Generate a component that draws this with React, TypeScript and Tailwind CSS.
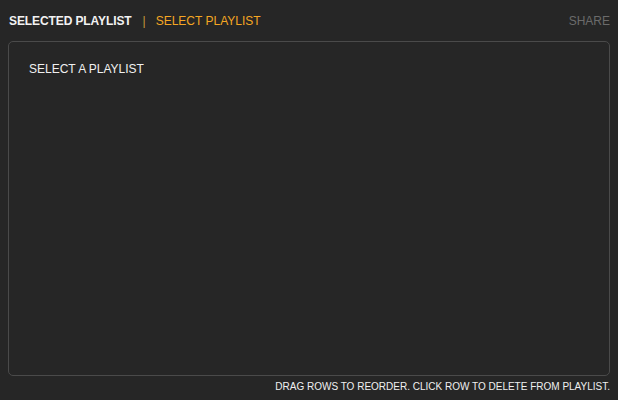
export default function App() {
  return (
    <div className="flex h-[400px] w-[618px] flex-col bg-[#262626] px-2 font-['Liberation_Sans',Arial,sans-serif]">
      <div className="flex h-[41px] items-center justify-between pl-px pt-px text-[12px]">
        <div className="flex items-center">
          <span className="font-bold tracking-[-0.1px] text-[#f2f2f2]">SELECTED PLAYLIST</span>
          <span className="ml-[11px] text-[#c79a3a]">|</span>
          <span className="ml-[10px] text-[#f5a623]">SELECT PLAYLIST</span>
        </div>
        <span className="text-[#6b6b6b]">SHARE</span>
      </div>
      <div className="h-[335px] rounded-[5px] border border-[#4a4a4a] px-5 py-[20px]">
        <p className="text-[12px] leading-[14px] text-[#f0f0f0]">SELECT A PLAYLIST</p>
      </div>
      <p className="mt-[5px] text-right text-[10px] leading-[12px] text-[#f0f0f0]">
        DRAG ROWS TO REORDER. CLICK ROW TO DELETE FROM PLAYLIST.
      </p>
    </div>
  );
}
